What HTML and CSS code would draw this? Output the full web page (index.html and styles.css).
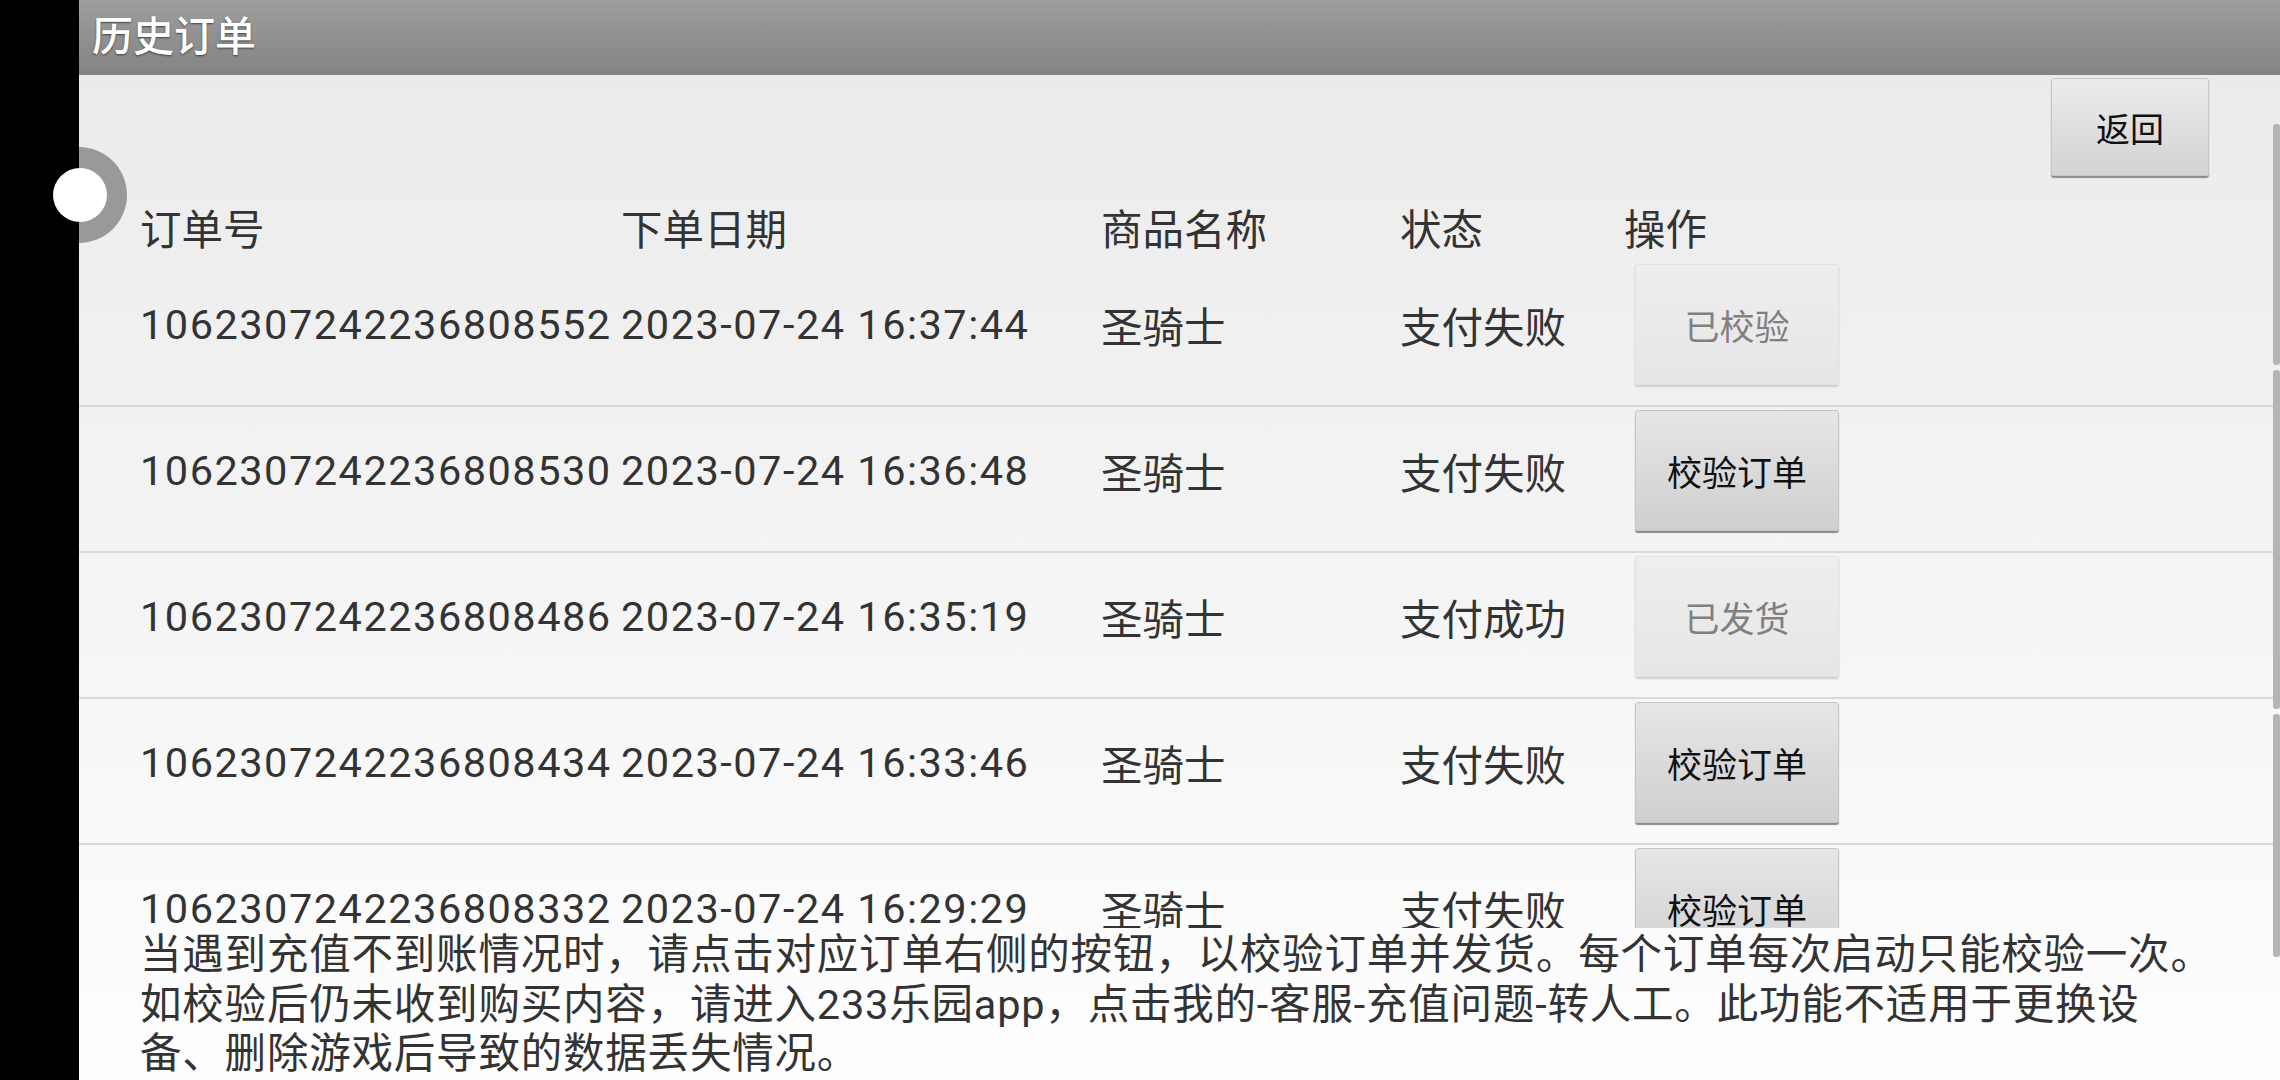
FILE: index.html
```html
<!doctype html>
<html>
<head>
	<meta charset="utf-8">
	<title>历史订单</title>
	<link rel="stylesheet" href="styles.css">
</head>
<body>
	<div class="screen">
		<div class="notch"></div>
		<div class="app">
			<div class="titlebar">历史订单</div>
			<div class="content">
				<div class="list">
					<div class="toolbar">
						<button class="btn btn-back">返回</button>
					</div>
					<div class="thead">
						<span>订单号</span>
						<span>下单日期</span>
						<span>商品名称</span>
						<span>状态</span>
						<span>操作</span>
					</div>
					<div class="row">
						<span class="num">1062307242236808552</span>
						<span class="num">2023-07-24 16:37:44</span>
						<span>圣骑士</span>
						<span>支付失败</span>
						<span><button class="btn btn-done">已校验</button></span>
					</div>
					<div class="row">
						<span class="num">1062307242236808530</span>
						<span class="num">2023-07-24 16:36:48</span>
						<span>圣骑士</span>
						<span>支付失败</span>
						<span><button class="btn">校验订单</button></span>
					</div>
					<div class="row">
						<span class="num">1062307242236808486</span>
						<span class="num">2023-07-24 16:35:19</span>
						<span>圣骑士</span>
						<span>支付成功</span>
						<span><button class="btn btn-done">已发货</button></span>
					</div>
					<div class="row">
						<span class="num">1062307242236808434</span>
						<span class="num">2023-07-24 16:33:46</span>
						<span>圣骑士</span>
						<span>支付失败</span>
						<span><button class="btn">校验订单</button></span>
					</div>
					<div class="row">
						<span class="num">1062307242236808332</span>
						<span class="num">2023-07-24 16:29:29</span>
						<span>圣骑士</span>
						<span>支付失败</span>
						<span><button class="btn">校验订单</button></span>
					</div>
				</div>
				<p class="notice">当遇到充值不到账情况时，请点击对应订单右侧的按钮，以校验订单并发货。每个订单每次启动只能校验一次。<br>如校验后仍未收到购买内容，请进入233乐园app，点击我的-客服-充值问题-转人工。此功能不适用于更换设<br>备、删除游戏后导致的数据丢失情况。</p>
			</div>
			<!-- 悬浮球底座 -->
			<div class="float-base"></div>
			<!-- 滚动条 -->
			<div class="scrollbar">
				<i class="seg seg1"></i>
				<i class="seg seg2"></i>
				<i class="seg seg3"></i>
			</div>
		</div>
		<div class="float-ball"></div>
	</div>
</body>
</html>
```
FILE: styles.css
```css
	body {
		margin: 0;
		background: #000;
		font-family: Roboto, "Noto Sans CJK SC", sans-serif;
		color: #333;
		overflow: hidden;
	}
	.screen {
		display: flex;
		height: 1080px;
		position: relative;
	}
	.notch {
		width: 79px;
		flex: none;
		background: #000;
	}
	.app {
		flex: 1;
		display: flex;
		flex-direction: column;
		position: relative;
		overflow: hidden;
	}
	.titlebar {
		height: 75px;
		line-height: 75px;
		padding-left: 13px;
		font-size: 41px;
		font-weight: 500;
		color: #fff;
		text-shadow: 0 1px 2px rgba(0,0,0,.55);
		background: linear-gradient(to bottom, #9e9e9e 0, #838383 100%);
	}
	.content {
		flex: 1;
		display: flex;
		flex-direction: column;
		background: linear-gradient(to bottom, #ebebeb 0, #fefefe 100%);
	}
	.list {
		height: 853px;
		overflow: hidden;
	}
	.toolbar {
		display: flex;
		justify-content: flex-end;
		padding: 3px 71px 0 0;
	}
	.btn {
		width: 204px;
		height: 121px;
		padding: 0;
		font-family: Roboto, "Noto Sans CJK SC", sans-serif;
		font-size: 35px;
		color: #111;
		border: 1px solid #c6c6c6;
		border-radius: 3px;
		background: linear-gradient(to bottom, #e6e6e6 0, #cfcfcf 100%);
		box-shadow: 0 2px 1px #8a8a8a;
	}
	.btn-back {
		width: 158px;
		height: 98px;
		font-size: 34px;
		background: linear-gradient(to bottom, #ececec 0, #d3d3d3 100%);
	}
	.btn-done {
		color: #808080;
		border-color: #e2e2e2;
		background: linear-gradient(to bottom, #eeeeee 0, #e6e6e6 100%);
		box-shadow: 0 2px 2px #cdcdcd;
	}
	.thead, .row {
		display: grid;
		grid-template-columns: 481px 480px 299px 224px 1fr;
		padding-left: 61px;
		font-size: 41.5px;
	}
	.thead {
		height: 49px;
		line-height: 49px;
		padding-top: 30px;
		padding-bottom: 6px;
	}
	.row {
		height: 121px;
		padding-top: 3px;
		padding-bottom: 20px;
		align-items: center;
		border-bottom: 2px solid #d9d9d9;
	}
	.row .btn {
		margin-left: 11px;
	}
	.num {
		letter-spacing: 1.5px;
	}
	.notice {
		margin: 0;
		padding: 2px 0 0 61px;
		font-size: 41.5px;
		line-height: 49.5px;
		letter-spacing: 0.8px;
	}
	.float-base {
		position: absolute;
		left: -48px;
		top: 147px;
		width: 96px;
		height: 96px;
		border-radius: 50%;
		background: #999;
	}
	.float-ball {
		position: absolute;
		left: 53px;
		top: 168px;
		width: 54px;
		height: 54px;
		border-radius: 50%;
		background: #fff;
	}
	.scrollbar {
		position: absolute;
		right: 0;
		top: 124px;
		width: 7px;
		height: 833px;
	}
	.seg {
		position: absolute;
		left: 0;
		width: 7px;
		background: #b5b5b5;
		border-radius: 3px;
	}
	.seg1 { top: 0; height: 241px; }
	.seg2 { top: 246px; height: 339px; }
	.seg3 { top: 590px; height: 243px; }
```
